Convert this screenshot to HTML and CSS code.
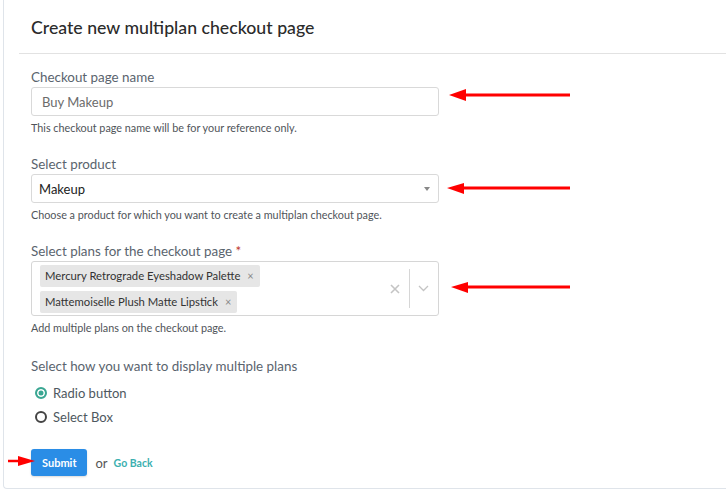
FILE: index.html
```html
<!DOCTYPE html>
<html>
<head>
    <title>Create new multiplan checkout page</title>
    <link rel="stylesheet" href="styles.css">
</head>
<body>
<div class="page">
    <div class="card">
        <div class="card-header">
            <h1 class="card-title">Create new multiplan checkout page</h1>
        </div>
        <div class="card-body">
            <div class="form-group">
                <label class="form-label">Checkout page name</label>
                <div class="form-input">Buy Makeup</div>
                <p class="form-help">This checkout page name will be for your reference only.</p>
            </div>
            <div class="form-group">
                <label class="form-label">Select product</label>
                <div class="form-select">
                    <span>Makeup</span>
                    <span class="caret"></span>
                </div>
                <p class="form-help">Choose a product for which you want to create a multiplan checkout page.</p>
            </div>
            <div class="form-group">
                <label class="form-label">Select plans for the checkout page <span class="required">*</span></label>
                <div class="multi">
                    <div class="multi-values">
                        <span class="tag">Mercury Retrograde Eyeshadow Palette <span class="tag-x">&times;</span></span>
                        <span class="tag">Mattemoiselle Plush Matte Lipstick <span class="tag-x">&times;</span></span>
                    </div>
                    <div class="multi-indicators">
                        <svg class="clear" width="10" height="10" viewBox="0 0 10 10">
                            <path d="M1 1 L9 9 M9 1 L1 9" stroke="#c4c4c4" stroke-width="1.6" fill="none"/>
                        </svg>
                        <span class="sep"></span>
                        <svg class="chevron" width="11" height="7" viewBox="0 0 11 7">
                            <path d="M1 1 L5.5 5.5 L10 1" stroke="#c4c4c4" stroke-width="1.3" fill="none"/>
                        </svg>
                    </div>
                </div>
                <p class="form-help">Add multiple plans on the checkout page.</p>
            </div>
            <div class="form-group form-group-radios">
                <label class="form-label">Select how you want to display multiple plans</label>
                <div class="radios">
                    <div class="radio"><span class="dot dot-on"></span>Radio button</div>
                    <div class="radio"><span class="dot"></span>Select Box</div>
                </div>
            </div>
            <div class="actions">
                <button class="btn">Submit</button>
                <span class="or">or</span>
                <a class="back" href="#">Go Back</a>
            </div>
        </div>
    </div>

    <svg class="arrows" width="726" height="492" viewBox="0 0 726 492">
        <g fill="#f00" stroke="#f00">
            <line x1="464" y1="95" x2="570" y2="95" stroke-width="3"/>
            <polygon points="449,95 466,89 466,101" stroke="none"/>
            <line x1="462" y1="188" x2="570" y2="188" stroke-width="3"/>
            <polygon points="447,188 464,183 464,194" stroke="none"/>
            <line x1="466" y1="287" x2="570" y2="287" stroke-width="3"/>
            <polygon points="451,287 468,282 468,293" stroke="none"/>
            <line x1="8" y1="461" x2="20" y2="461" stroke-width="2.5"/>
            <polygon points="35,461 18,456 18,466" stroke="none"/>
        </g>
    </svg>
</div>
</body>
</html>
```

FILE: styles.css
```css
body {
    margin: 0;
    background: #fff;
    font-family: Lato, "Open Sans", sans-serif;
    color: #5b6670;
}
.page {
    position: relative;
    width: 726px;
    height: 492px;
    overflow: hidden;
}
.card {
    margin-left: 3px;
    width: 760px;
    height: 489px;
    box-sizing: border-box;
    border-left: 1px solid #dfe4ea;
    border-bottom: 1px solid #dfe4ea;
    border-bottom-left-radius: 4px;
}
.card-header {
    height: 53px;
    margin-left: 15px;
    border-bottom: 1px solid #e2e2e2;
    display: flex;
    align-items: center;
}
.card-title {
    margin: 2px 0 0 12px;
    font-size: 17.7px;
    font-weight: 500;
    color: #2b2b2b;
}
.card-body {
    padding: 15px 0 0 27px;
    width: 408px;
}
.form-group {
    margin-bottom: 22px;
}
.form-group-radios {
    margin-top: 24px;
}
.form-label {
    display: block;
    font-size: 13.4px;
    line-height: 16px;
    color: #5a646e;
    margin-bottom: 2px;
}
.required {
    color: #c0392b;
}
.form-input,
.form-select {
    height: 29px;
    box-sizing: border-box;
    border: 1px solid #d9d9d9;
    border-radius: 3px;
    display: flex;
    align-items: center;
    font-size: 13px;
}
.form-input {
    padding-left: 10px;
    color: #6b6b6b;
}
.form-select {
    padding: 0 8px 0 7px;
    justify-content: space-between;
    color: #222;
}
.caret {
    width: 0;
    height: 0;
    border-left: 3px solid transparent;
    border-right: 3px solid transparent;
    border-top: 4px solid #888;
}
.form-help {
    margin: 5px 0 0;
    font-size: 10.8px;
    line-height: 13px;
    color: #4f5459;
}
.multi {
    height: 55px;
    box-sizing: border-box;
    border: 1px solid #d6d6d6;
    border-radius: 3px;
    display: flex;
    align-items: center;
}
.multi-values {
    flex: 1;
    display: flex;
    flex-direction: column;
    align-items: flex-start;
    gap: 4px;
    padding-left: 8px;
}
.tag {
    background: #e6e6e6;
    border-radius: 2px;
    font-size: 11.3px;
    line-height: 22px;
    padding: 0 6px 0 5px;
    color: #333;
}
.tag-x {
    margin-left: 4px;
    font-size: 11px;
    color: #888;
}
.multi-indicators {
    display: flex;
    align-items: center;
    align-self: stretch;
    padding: 7px 0;
}
.clear {
    margin-right: 9px;
}
.sep {
    width: 1px;
    align-self: stretch;
    background: #d6d6d6;
}
.chevron {
    margin: 0 9px 0 8px;
}
.radios {
    margin-top: 7px;
}
.radio {
    display: flex;
    align-items: center;
    height: 24px;
    font-size: 13px;
    color: #4e5860;
}
.dot {
    width: 8px;
    height: 8px;
    border: 2px solid #444;
    border-radius: 50%;
    margin: 0 6px 0 4px;
}
.dot-on {
    border-color: #3aa692;
    background: #3aa692;
    box-shadow: inset 0 0 0 1.5px #fff;
}
.actions {
    display: flex;
    align-items: center;
    margin-top: -2px;
}
.btn {
    height: 27px;
    padding: 0 11px;
    border: none;
    border-radius: 3px;
    background: #2a8de6;
    color: #fff;
    font-family: inherit;
    font-size: 11px;
    font-weight: 700;
    box-shadow: 0 1px 2px rgba(0,0,0,0.15);
}
.or {
    margin-left: 8px;
    font-size: 13px;
    color: #555;
}
.back {
    margin-left: 6px;
    font-size: 10.5px;
    font-weight: 700;
    color: #3cb0b0;
    text-decoration: none;
}
.arrows {
    position: absolute;
    left: 0;
    top: 0;
}
```
